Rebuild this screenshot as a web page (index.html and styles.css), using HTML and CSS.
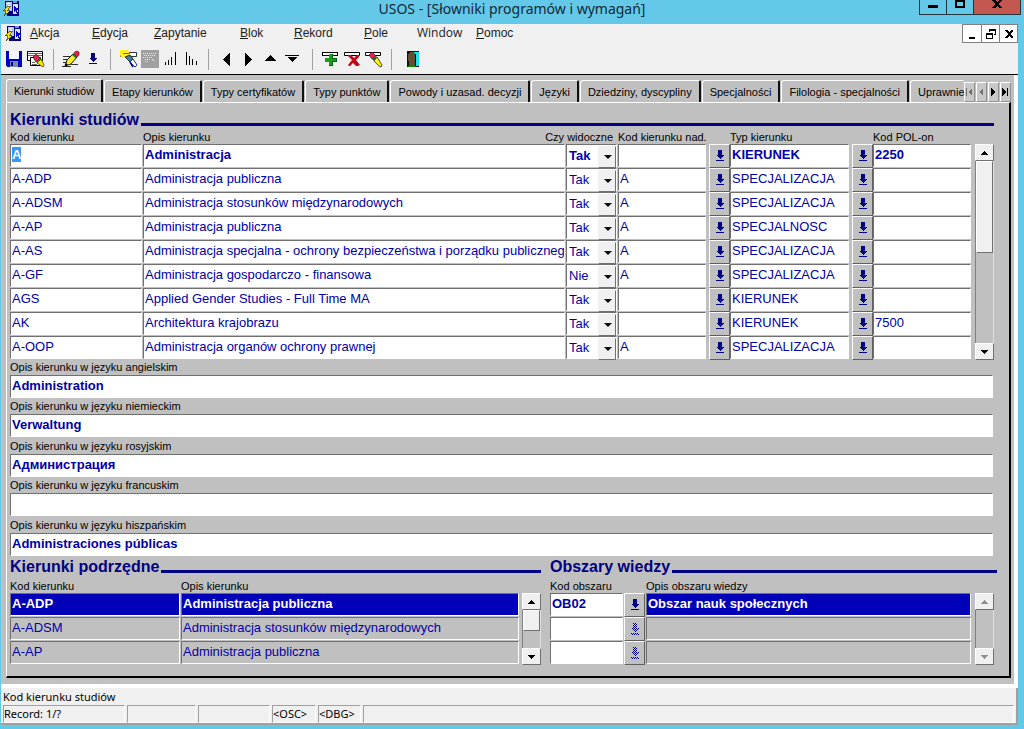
FILE: index.html
```html
<!DOCTYPE html>
<html lang="pl">
<head>
<meta charset="utf-8">
<title>USOS - [Słowniki programów i wymagań]</title>
<link rel="stylesheet" href="styles.css">
</head>
<body>
<svg class="defs" aria-hidden="true">
  <defs>
    <pattern id="dither" width="2" height="2" patternUnits="userSpaceOnUse"><path d="M0 0h1v1H0zM1 1h1v1H1z" fill="#000080"/></pattern>
  </defs>
  <symbol id="app" viewBox="0 0 16 16">
    <path d="M2 1h13v14H4V9H2z" fill="#000080"/><path d="M3 2h5v8H3z" fill="#b8c8f8"/><path d="M9 1h4v2H9z" fill="#7890e0"/><path d="M9 4h5v9H9z" fill="#d8e4ff"/>
    <path d="M10 5v7l2-2 1 3h1l-1-4h2z" fill="#0000c8"/><path d="M4 3h3M5 5h2" stroke="#fff"/><path d="M4 6L0 10h3l-2 5 6-5H4l3-4z" fill="#ffe800" stroke="#303000" stroke-width=".6"/>
  </symbol>
  <symbol id="lov" viewBox="0 0 8 12"><path d="M2 0h4v5h2L4 9 0 5h2zM0 10h8v1H0z" fill="#000080"/></symbol>
  <symbol id="lov-off" viewBox="0 0 8 12"><path d="M2 0h4v5h2L4 9 0 5h2zM0 10h8v2H0z" fill="url(#dither)"/></symbol>
  <symbol id="up" viewBox="0 0 7 4"><path d="M3 0h1v1h1v1h1v1h1v1H0V3h1V2h1V1h1z" fill="currentColor"/></symbol>
  <symbol id="down" viewBox="0 0 7 4"><path d="M0 0h7v1H6v1H5v1H4v1H3V3H2V2H1V1H0z" fill="currentColor"/></symbol>
</svg>

<header class="titlebar">
  <svg class="app-icon"><use href="#app"/></svg>
  <h1>USOS - [Słowniki programów i wymagań]</h1>
  <div class="caption-buttons">
    <button aria-label="Minimalizuj"><svg width="10" height="8"><path d="M0 5h10v3H0z"/></svg></button>
    <button aria-label="Maksymalizuj"><svg width="10" height="8"><path d="M0 0h10v8H0zM2 2v4h6V2z" fill-rule="evenodd"/></svg></button>
    <button class="close" aria-label="Zamknij"><svg width="10" height="8"><path d="M0 0h3l2 2 2-2h3L7 4l3 4H7L5 6 3 8H0l3-4z"/></svg></button>
  </div>
</header>

<div class="window">
  <div class="menubar">
    <svg class="app-icon"><use href="#app"/></svg>
    <nav class="menu">
      <button><u>A</u>kcja</button><button><u>E</u>dycja</button><button><u>Z</u>apytanie</button><button><u>B</u>lok</button><button><u>R</u>ekord</button><button><u>P</u>ole</button><button class="system">Window</button><button><u>P</u>omoc</button>
    </nav>
    <div class="child-buttons">
      <button aria-label="Minimalizuj okno"><svg width="10" height="10"><path d="M2 8h6v2H2z"/></svg></button>
      <button aria-label="Przywróć okno"><svg width="10" height="10"><path d="M3 0h7v6H8V5h1V2H4v1H3zM0 4h7v6H0zM1 6v3h5V6z" fill-rule="evenodd"/></svg></button>
      <button aria-label="Zamknij okno"><svg width="10" height="10"><path d="M1 1h2l2 2 2-2h2v1L6 5l3 3v1H7L5 7 3 9H1V8l3-3-3-3z"/></svg></button>
    </div>
  </div>

  <div class="toolbar">
    <div class="group">
      <button aria-label="Zapisz"><svg width="16" height="16"><path d="M0 0h16v16H1l-1-1z" fill="#0000c0"/><path d="M3 0h10v8H3z" fill="#f4f4ff"/><path d="M4 10h8v6H4z" fill="#8088a8"/><path d="M5 11h2v4H5z" fill="#0000b0"/></svg></button>
      <button aria-label="Drukuj"><svg class="soft" width="18" height="18"><path d="M.5 1.500h15v9H.5z" fill="#fff" stroke="#000"/><path d="M1 3.500h14M1 5.500h14" stroke="#4c7070"/><path d="M3.500 7.500h10v8h-10z" fill="#fff" stroke="#000"/><path d="M5 12.500h3M5 14.500h5" stroke="#666"/><path d="M6 7l3-3 4 4-4 4z" fill="#e82050" stroke="#400" stroke-width=".7"/><path d="M9 12l4-4 1 1-4 4z" fill="#108840"/><path d="M10 13l4-4 3 6-1 2z" fill="#ffe800" stroke="#222" stroke-width=".7"/></svg></button>
    </div><i class="sep"></i>
    <div class="group">
      <button aria-label="Edytuj"><svg class="soft" width="18" height="18"><path d="M1 6.500h10M1 9.500h7M1 12.500h5M9 14.500h7M0 16.500h9" stroke="#303030"/><path d="M3 16l2-6 6-6 4 3-6 7z" fill="#fff020" stroke="#000" stroke-width=".9"/><path d="M11 4l4 3-1 1.500L10 5z" fill="#108840"/><path d="M11.500 3.500L14 1l3 1v3l-2 2z" fill="#e82050" stroke="#500" stroke-width=".6"/><path d="M3 16l1-3 2 2z"/></svg></button>
      <button aria-label="Lista wartości"><svg width="8" height="12"><use href="#lov"/></svg></button>
    </div><i class="sep"></i>
    <div class="group query">
      <button aria-label="Zapytanie"><svg class="soft" width="18" height="18"><path d="M.5 2.500h16v4H.5z" fill="#fff" stroke="#333"/><path d="M0 0h8l2 4-2 3H1L0 5z" fill="#ffee20"/><path d="M3 3.500h7" stroke="#807000"/><path d="M5 7l5-2 3 4-3 3z" fill="#3880a0" stroke="#111" stroke-width=".8"/><path d="M10 12l3-3 4 6-2 2z" fill="#fff" stroke="#102060" stroke-width=".9"/><path d="M10 12l3 5" stroke="#0000a0" stroke-width="1.500"/></svg></button>
      <button aria-label="Wykonaj zapytanie" disabled><svg width="18" height="18"><path d="M0 0h18v18H0z" fill="#a0a0a0"/><path d="M2 3.500h13M3 5.500h11M2 7.500h9M4 9.500h5M4 11.500h3M11 9l3 3" stroke="#e8e8e8" stroke-dasharray="1 1"/></svg></button>
      <button aria-label="Sortuj rosnąco"><svg width="12" height="14"><path d="M.5 10v3M3.500 8v5M6.500 5v8M10.500 0v13" stroke="#000"/></svg></button>
      <button aria-label="Sortuj malejąco"><svg width="12" height="14"><path d="M.5 0v13M3.500 4v9M6.500 7v6M10.500 9v4" stroke="#000"/></svg></button>
    </div><i class="sep"></i>
    <div class="group moves">
      <button aria-label="Poprzedni"><svg width="7" height="13"><path d="M7 0v13L0 7V6z"/></svg></button>
      <button aria-label="Następny"><svg width="7" height="13"><path d="M0 0v13l7-6V6z"/></svg></button>
      <button aria-label="Poprzedni zestaw"><svg width="14" height="8"><path d="M7 0l6 6H1z"/></svg></button>
      <button aria-label="Następny zestaw"><svg width="14" height="8"><path d="M0 0h14v1H0zM2 2h10L7 7z"/></svg></button>
    </div><i class="sep"></i>
    <div class="group">
      <button aria-label="Wstaw rekord"><svg width="17" height="16"><path d="M.5 1.500h15v3H.5z" fill="#fff" stroke="#000"/><path d="M7 3h4v4h4v4h-4v4H7v-4H3V7h4z" fill="#18a018"/><path d="M10 3h1v4h4v4h-4v4H7v-1h3v-4h4V8h-4z" fill="#086018"/></svg></button>
      <button aria-label="Usuń rekord"><svg class="soft" width="17" height="16"><path d="M.5 1.500h15v3H.5z" fill="#fff" stroke="#000"/><path d="M4 4h3l3 3 3-3h2v2l-3 3 4 5-2 1h-2l-3-3-3 3H5l-1-1 4-5-4-4z" fill="#c00818"/></svg></button>
      <button aria-label="Wyczyść rekord"><svg class="soft" width="18" height="18"><path d="M.5 2.500h15v3H.5z" fill="#fff" stroke="#000"/><path d="M4 5l3-3 4 4-4 3z" fill="#e82058" stroke="#500" stroke-width=".6"/><path d="M7 9l4-3 1 1-3 4z" fill="#186840"/><path d="M9 11l3-4 5 8-1 2-2-1z" fill="#fff020" stroke="#222" stroke-width=".8"/></svg></button>
    </div><i class="sep"></i>
    <div class="group exit">
      <button aria-label="Wyjście"><svg width="13" height="16"><path d="M0 0h12v16H0z" fill="#111"/><path d="M7 1h5v14H9V4z" fill="#20e0e8"/><path d="M1 3l2-2h4l1 2v13H2z" fill="#605030"/><path d="M1 15h8" stroke="#080"/></svg></button>
    </div>
  </div>

  <main class="mdi">
    <div class="tabs" role="tablist">
      <button role="tab" class="active" aria-selected="true">Kierunki studiów</button>
      <button role="tab">Etapy kierunków</button>
      <button role="tab">Typy certyfikatów</button>
      <button role="tab">Typy punktów</button>
      <button role="tab">Powody i uzasad. decyzji</button>
      <button role="tab">Języki</button>
      <button role="tab">Dziedziny, dyscypliny</button>
      <button role="tab">Specjalności</button>
      <button role="tab">Filologia - specjalności</button>
      <button role="tab" class="last">Uprawnienia</button>
      <div class="tab-scroll">
        <button aria-label="Pierwsza" disabled><svg width="7" height="8"><path d="M0 0h1v8H0zM6 0v8L2 4z"/></svg></button>
        <button aria-label="Poprzednia" disabled><svg width="5" height="8"><path d="M4 0v8L0 4z"/></svg></button>
        <button aria-label="Następna"><svg width="5" height="8"><path d="M0 0v8l4-4z"/></svg></button>
        <button aria-label="Ostatnia"><svg width="7" height="8"><path d="M0 0v8l4-4zM5 0h1v8H5z"/></svg></button>
      </div>
    </div>

    <div class="page">
      <section class="master">
        <h2>Kierunki studiów</h2>
        <div class="block">
          <table class="programs">
            <colgroup><col class="c-code"><col><col class="c-visible"><col class="c-parent"><col class="c-lov"><col class="c-type"><col class="c-lov"><col class="c-polon"></colgroup>
            <thead><tr><th>Kod kierunku</th><th>Opis kierunku</th><th class="to-left"><span>Czy widoczne</span></th><th>Kod kierunku nad.</th><th></th><th>Typ kierunku</th><th></th><th>Kod POL-on</th></tr></thead>
            <tbody>
              <tr class="current"><td><input id="current-code" aria-label="Kod kierunku" value="A"></td><td><input aria-label="Opis kierunku" value="Administracja"></td><td><div class="drop"><select aria-label="Czy widoczne"><option>Tak</option><option>Nie</option></select></div></td><td><input aria-label="Kod kierunku nad."></td><td><button class="lov" aria-label="Lista"><svg><use href="#lov"/></svg></button></td><td><input aria-label="Typ kierunku" value="KIERUNEK"></td><td><button class="lov" aria-label="Lista"><svg><use href="#lov"/></svg></button></td><td><input aria-label="Kod POL-on" value="2250"></td></tr>
              <tr><td><input aria-label="Kod kierunku" value="A-ADP"></td><td><input aria-label="Opis kierunku" value="Administracja publiczna"></td><td><div class="drop"><select aria-label="Czy widoczne"><option>Tak</option><option>Nie</option></select></div></td><td><input aria-label="Kod kierunku nad." value="A"></td><td><button class="lov" aria-label="Lista"><svg><use href="#lov"/></svg></button></td><td><input aria-label="Typ kierunku" value="SPECJALIZACJA"></td><td><button class="lov" aria-label="Lista"><svg><use href="#lov"/></svg></button></td><td><input aria-label="Kod POL-on"></td></tr>
              <tr><td><input aria-label="Kod kierunku" value="A-ADSM"></td><td><input aria-label="Opis kierunku" value="Administracja stosunków międzynarodowych"></td><td><div class="drop"><select aria-label="Czy widoczne"><option>Tak</option><option>Nie</option></select></div></td><td><input aria-label="Kod kierunku nad." value="A"></td><td><button class="lov" aria-label="Lista"><svg><use href="#lov"/></svg></button></td><td><input aria-label="Typ kierunku" value="SPECJALIZACJA"></td><td><button class="lov" aria-label="Lista"><svg><use href="#lov"/></svg></button></td><td><input aria-label="Kod POL-on"></td></tr>
              <tr><td><input aria-label="Kod kierunku" value="A-AP"></td><td><input aria-label="Opis kierunku" value="Administracja publiczna"></td><td><div class="drop"><select aria-label="Czy widoczne"><option>Tak</option><option>Nie</option></select></div></td><td><input aria-label="Kod kierunku nad." value="A"></td><td><button class="lov" aria-label="Lista"><svg><use href="#lov"/></svg></button></td><td><input aria-label="Typ kierunku" value="SPECJALNOSC"></td><td><button class="lov" aria-label="Lista"><svg><use href="#lov"/></svg></button></td><td><input aria-label="Kod POL-on"></td></tr>
              <tr><td><input aria-label="Kod kierunku" value="A-AS"></td><td><input aria-label="Opis kierunku" value="Administracja specjalna - ochrony bezpieczeństwa i porządku publicznego"></td><td><div class="drop"><select aria-label="Czy widoczne"><option>Tak</option><option>Nie</option></select></div></td><td><input aria-label="Kod kierunku nad." value="A"></td><td><button class="lov" aria-label="Lista"><svg><use href="#lov"/></svg></button></td><td><input aria-label="Typ kierunku" value="SPECJALIZACJA"></td><td><button class="lov" aria-label="Lista"><svg><use href="#lov"/></svg></button></td><td><input aria-label="Kod POL-on"></td></tr>
              <tr><td><input aria-label="Kod kierunku" value="A-GF"></td><td><input aria-label="Opis kierunku" value="Administracja gospodarczo - finansowa"></td><td><div class="drop"><select aria-label="Czy widoczne"><option>Tak</option><option selected>Nie</option></select></div></td><td><input aria-label="Kod kierunku nad." value="A"></td><td><button class="lov" aria-label="Lista"><svg><use href="#lov"/></svg></button></td><td><input aria-label="Typ kierunku" value="SPECJALIZACJA"></td><td><button class="lov" aria-label="Lista"><svg><use href="#lov"/></svg></button></td><td><input aria-label="Kod POL-on"></td></tr>
              <tr><td><input aria-label="Kod kierunku" value="AGS"></td><td><input aria-label="Opis kierunku" value="Applied Gender Studies - Full Time MA"></td><td><div class="drop"><select aria-label="Czy widoczne"><option>Tak</option><option>Nie</option></select></div></td><td><input aria-label="Kod kierunku nad."></td><td><button class="lov" aria-label="Lista"><svg><use href="#lov"/></svg></button></td><td><input aria-label="Typ kierunku" value="KIERUNEK"></td><td><button class="lov" aria-label="Lista"><svg><use href="#lov"/></svg></button></td><td><input aria-label="Kod POL-on"></td></tr>
              <tr><td><input aria-label="Kod kierunku" value="AK"></td><td><input aria-label="Opis kierunku" value="Architektura krajobrazu"></td><td><div class="drop"><select aria-label="Czy widoczne"><option>Tak</option><option>Nie</option></select></div></td><td><input aria-label="Kod kierunku nad."></td><td><button class="lov" aria-label="Lista"><svg><use href="#lov"/></svg></button></td><td><input aria-label="Typ kierunku" value="KIERUNEK"></td><td><button class="lov" aria-label="Lista"><svg><use href="#lov"/></svg></button></td><td><input aria-label="Kod POL-on" value="7500"></td></tr>
              <tr><td><input aria-label="Kod kierunku" value="A-OOP"></td><td><input aria-label="Opis kierunku" value="Administracja organów ochrony prawnej"></td><td><div class="drop"><select aria-label="Czy widoczne"><option>Tak</option><option>Nie</option></select></div></td><td><input aria-label="Kod kierunku nad." value="A"></td><td><button class="lov" aria-label="Lista"><svg><use href="#lov"/></svg></button></td><td><input aria-label="Typ kierunku" value="SPECJALIZACJA"></td><td><button class="lov" aria-label="Lista"><svg><use href="#lov"/></svg></button></td><td><input aria-label="Kod POL-on"></td></tr>
            </tbody>
          </table>
          <div class="scrollbar">
            <button aria-label="W górę"><svg><use href="#up"/></svg></button><div class="track"><div class="thumb tall"></div></div><button aria-label="W dół"><svg><use href="#down"/></svg></button>
          </div>
        </div>
        <div class="translations">
          <div><label for="t-en">Opis kierunku w języku angielskim</label><input id="t-en" value="Administration"></div>
          <div><label for="t-de">Opis kierunku w języku niemieckim</label><input id="t-de" value="Verwaltung"></div>
          <div><label for="t-ru">Opis kierunku w języku rosyjskim</label><input id="t-ru" value="Администрация"></div>
          <div><label for="t-fr">Opis kierunku w języku francuskim</label><input id="t-fr"></div>
          <div><label for="t-es">Opis kierunku w języku hiszpańskim</label><input id="t-es" value="Administraciones públicas"></div>
        </div>
      </section>

      <div class="details">
        <section>
          <h2>Kierunki podrzędne</h2>
          <div class="block">
            <table class="readonly">
              <colgroup><col class="c-subcode"><col></colgroup>
              <thead><tr><th>Kod kierunku</th><th>Opis kierunku</th></tr></thead>
              <tbody>
                <tr class="chosen"><td><input readonly aria-label="Kod kierunku" value="A-ADP"></td><td><input readonly aria-label="Opis kierunku" value="Administracja publiczna"></td></tr>
                <tr><td><input readonly aria-label="Kod kierunku" value="A-ADSM"></td><td><input readonly aria-label="Opis kierunku" value="Administracja stosunków międzynarodowych"></td></tr>
                <tr><td><input readonly aria-label="Kod kierunku" value="A-AP"></td><td><input readonly aria-label="Opis kierunku" value="Administracja publiczna"></td></tr>
              </tbody>
            </table>
            <div class="scrollbar">
              <button aria-label="W górę"><svg><use href="#up"/></svg></button><div class="track"><div class="thumb"></div></div><button aria-label="W dół"><svg><use href="#down"/></svg></button>
            </div>
          </div>
        </section>
        <section>
          <h2>Obszary wiedzy</h2>
          <div class="block">
            <table class="areas">
              <colgroup><col class="c-area"><col class="c-arealov"><col></colgroup>
              <thead><tr><th>Kod obszaru</th><th></th><th>Opis obszaru wiedzy</th></tr></thead>
              <tbody>
                <tr class="chosen"><td><input aria-label="Kod obszaru" value="OB02"></td><td><button class="lov" aria-label="Lista"><svg><use href="#lov"/></svg></button></td><td><input readonly aria-label="Opis obszaru wiedzy" value="Obszar nauk społecznych"></td></tr>
                <tr><td><input aria-label="Kod obszaru"></td><td><button class="lov" aria-label="Lista" disabled><svg><use href="#lov-off"/></svg></button></td><td><input readonly aria-label="Opis obszaru wiedzy"></td></tr>
                <tr><td><input aria-label="Kod obszaru"></td><td><button class="lov" aria-label="Lista" disabled><svg><use href="#lov-off"/></svg></button></td><td><input readonly aria-label="Opis obszaru wiedzy"></td></tr>
              </tbody>
            </table>
            <div class="scrollbar">
              <button aria-label="W górę" disabled><svg><use href="#up"/></svg></button><div class="track"></div><button aria-label="W dół" disabled><svg><use href="#down"/></svg></button>
            </div>
          </div>
        </section>
      </div>
    </div>
  </main>

  <footer class="status">
    <p>Kod kierunku studiów</p>
    <div class="cells"><span>Record: 1/?</span><span></span><span></span><span>&lt;OSC&gt;</span><span>&lt;DBG&gt;</span><span></span></div>
  </footer>
</div>
<script src="app.js"></script>
</body>
</html>
```
FILE: styles.css
```css
* { box-sizing: border-box; }

body {
  margin: 0;
  background: #64c8e8;
  color: #000;
  font: 11px/14px "Liberation Sans", Arial, sans-serif;
}

button, input, select { font: inherit; color: inherit; margin: 0; padding: 0; border-radius: 0; }
button { border: 0; background: none; display: flex; align-items: center; justify-content: center; }
svg { display: block; flex: none; shape-rendering: crispEdges; }
.soft { shape-rendering: auto; }
.defs { position: absolute; width: 0; height: 0; }
.app-icon { width: 17px; height: 17px; }

/* Title bar */
.titlebar { display: grid; grid-template-columns: 1fr auto 1fr; height: 24px; padding: 0 3px; align-items: start; }
.titlebar h1 { margin: 0; font: 14px/18px "Noto Sans", "Open Sans", sans-serif; color: #102838; }
.caption-buttons { display: flex; justify-self: end; height: 15px; border: 1px solid #24343c; border-top: 0; }
.caption-buttons button { width: 27px; border-right: 1px solid #24343c; align-items: flex-start; overflow: hidden; }
.caption-buttons .close { width: 46px; background: #c45850; border-right: 0; }

/* Window frame */
.window { margin: 0 6px 6px 1px; background: #f0f0f0; }
.menubar { display: flex; height: 20px; padding-left: 4px; align-items: start; }
.menubar .app-icon { margin-top: 1px; }
.menu { display: grid; grid-template-columns: 62px 62px 86px 54px 70px 53px 59px 60px; flex: 1; padding-left: 8px; }
.menu button { justify-content: flex-start; font-size: 12px; line-height: 16px; color: #202020; }
.menu .system { font-family: "Open Sans", "Noto Sans", sans-serif; line-height: 18px; }
.child-buttons { display: flex; border: 1px solid #808080; height: 19px; }
.child-buttons button { width: 18px; background: #fff; }
.child-buttons button + button { border-left: 1px solid #808080; }

.toolbar { display: flex; align-items: center; height: 31px; padding-left: 2px; border-bottom: 1px solid #000; }
.group { display: flex; align-items: center; }
.group button { width: 22px; height: 22px; }
.query button { width: 21px; }
.sep { width: 1px; height: 21px; margin: 0 6px; background: #a0a0a0; }
.query { padding-left: 1px; }
.moves { padding-right: 3px; }
.exit { padding-left: 4px; }

/* Form area */
.mdi { background: #c0c0c0; border-right: 4px solid #fff; border-bottom: 4px solid #fff; padding: 4px 3px 6px 5px; }
.tabs { display: flex; height: 23px; align-items: flex-end; overflow: hidden; }
.tabs > button { flex: none; height: 22px; padding: 0 7px; border: 1px solid #fff; border-right: 2px solid #101010; border-bottom: 0; border-radius: 3px 2px 0 0; white-space: nowrap; margin-right: 1px; }
.tabs > .active { height: 23px; }
.tabs > .last { flex: 1 1 0; min-width: 0; overflow: hidden; justify-content: flex-start; border-right: 0; margin: 0; }
.tab-scroll { display: flex; gap: 1px; height: 20px; align-self: flex-end; }
.tab-scroll button { width: 11px; background: #c8c8c8; border: 1px solid; border-color: #fff #909090 #909090 #fff; }
.tab-scroll button:disabled { color: #707070; }
.tab-scroll svg { fill: currentColor; }

.page { border: 1px solid #fff; border-right: 2px solid #000; border-bottom: 2px solid #000; padding: 8px 12px 11px 3px; }
h2 { display: flex; margin: 0 0 3px; font-size: 16px; line-height: 18px; color: #000080; white-space: nowrap; }
h2::after { content: ""; flex: 1; height: 3px; margin: 12px 0 0 2px; background: #000080; }
.master h2 { margin: 0 3px 1px 0; }

.block { display: flex; gap: 3px; padding-right: 3px; }
table { flex: 1; width: 0; table-layout: fixed; border-collapse: collapse; }
th { height: 14px; padding: 0; font-weight: normal; text-align: left; vertical-align: top; white-space: nowrap; line-height: 14px; }
td { height: 24px; padding: 0; vertical-align: top; }
.to-left span { display: flex; justify-content: flex-end; padding-right: 5px; }

.c-code { width: 133px; }
.c-visible { width: 52px; }
.c-parent { width: 91px; }
.c-lov { width: 21px; }
.c-type { width: 122px; }
.c-polon { width: 99px; }
.c-subcode { width: 171px; }
.c-area { width: 74px; }
.c-arealov { width: 22px; }

input {
  display: block;
  width: calc(100% - 1px);
  height: 23px;
  padding: 0 0 3px 1px;
  background: #fff;
  border: 1px solid;
  border-color: #707070 #fff #fff #707070;
  font-size: 13px;
  color: #0000a8;
  outline: 0;
}
input::selection { background: #3399ff; color: #fff; }
.programs td:nth-child(4) input, .programs td:nth-child(6) input { width: calc(100% - 3px); }
.current, .current select, .translations input, .chosen input { font-weight: bold; }

.drop { position: relative; width: 51px; height: 23px; }
.drop select { appearance: none; width: 100%; height: 100%; padding-left: 2px; background: #fff; border: 1px solid; border-color: #707070 #fff #fff #707070; font-size: 13px; color: #0000a8; }
.drop::before { content: ""; position: absolute; right: 1px; top: 2px; width: 16px; height: 20px; background: #f0f0f0; border: 1px solid; border-color: #f0f0f0 #707070 #707070 #f0f0f0; pointer-events: none; }
.drop::after { content: ""; position: absolute; right: 5px; top: 11px; border: 4px solid transparent; border-top-color: #000; border-bottom: 0; pointer-events: none; }

.lov { width: 21px; height: 24px; background: #c0c0c0; border: 1px solid; border-color: #fff #606060 #606060 #fff; }
.lov svg { width: 8px; height: 12px; }

.scrollbar { display: flex; flex-direction: column; width: 19px; margin-top: 14px; }
.scrollbar button { width: 19px; height: 17px; background: #f0f0f0; border: 1px solid; border-color: #fff #707070 #707070 #fff; }
.scrollbar button:disabled { color: #909090; }
.scrollbar svg { width: 7px; height: 4px; }
.track { flex: 1; border: 1px solid; border-width: 0 1px; border-color: #fff #e0e0e0 #fff #808080; }
.thumb { height: 21px; background: #f0f0f0; border: 1px solid; border-color: #fff #707070 #707070 #fff; }
.tall { height: 92px; }

.translations { display: grid; grid-auto-rows: 39px 40px; margin-right: 3px; }
.translations label { display: block; height: 15px; }

.details { display: grid; grid-template-columns: 531fr 447fr; gap: 9px; padding-top: 1px; }
.details section:first-child .block { padding-right: 0; gap: 2px; }
.readonly input { background: #c0c0c0; }
.areas td:last-child input { background: #c0c0c0; }
.readonly .chosen input, .areas .chosen td:last-child input { background: #0000b8; color: #fff; }

/* Status line */
.status { padding: 2px 2px 0; border-right: 2px solid #a0a0a0; border-bottom: 2px solid #a0a0a0; font: 11px/14px "Noto Sans", "Open Sans", sans-serif; }
.status p { margin: 0; height: 15px; }
.cells { display: grid; grid-template-columns: 122px 69px 72px 44px 43px 1fr; gap: 2px; }
.cells span { height: 18px; line-height: 16px; border: 1px solid; border-color: #a0a0a0 #fff #fff #a0a0a0; white-space: nowrap; }
```
FILE: app.js
```js
// Start with the current record's code selected, ready for overtyping.
const code = document.getElementById('current-code');
code.focus();
code.select();
```
